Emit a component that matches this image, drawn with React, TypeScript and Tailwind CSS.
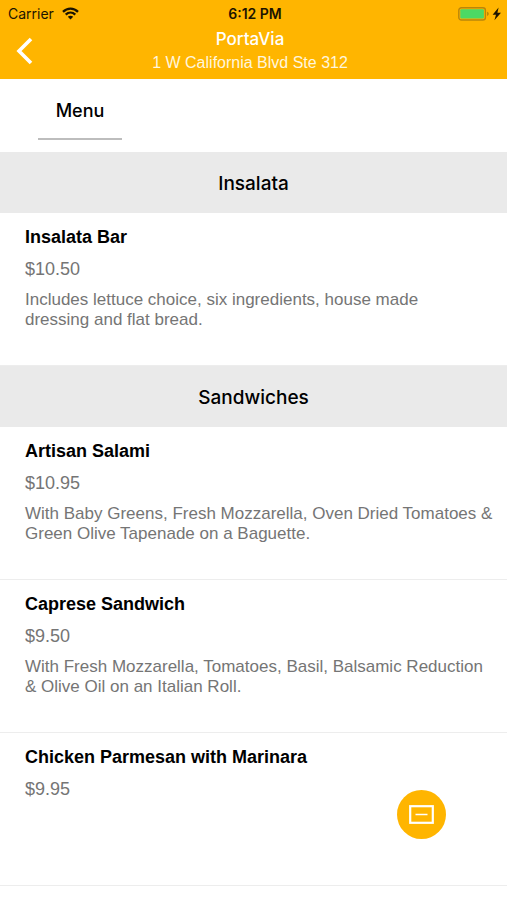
import React from 'react';

interface MenuItem {
    name: string;
    price: number;
    description?: string;
}

interface MenuSection {
    title: string;
    items: MenuItem[];
}

const sections: MenuSection[] = [
    {
        title: 'Insalata',
        items: [
            { name: 'Insalata Bar', price: 10.5, description: 'Includes lettuce choice, six ingredients, house made\ndressing and flat bread.' },
        ],
    },
    {
        title: 'Sandwiches',
        items: [
            { name: 'Artisan Salami', price: 10.95, description: 'With Baby Greens, Fresh Mozzarella, Oven Dried Tomatoes & Green Olive Tapenade on a Baguette.' },
            { name: 'Caprese Sandwich', price: 9.5, description: 'With Fresh Mozzarella, Tomatoes, Basil, Balsamic Reduction & Olive Oil on an Italian Roll.' },
            { name: 'Chicken Parmesan with Marinara', price: 9.95 },
        ],
    },
];

const WifiIcon: React.FC = () => (
    <svg className="h-[13px] w-[17px]" viewBox="0 0 17 13" fill="none" stroke="currentColor" strokeWidth="2.3" aria-hidden="true">
        <path d="M1 4.9C5.2 0.6 11.8 0.6 16 4.9" />
        <path d="M3.7 7.7C6.5 5 10.5 5 13.3 7.7" />
        <path d="M8.5 12.4L5.8 9.7C7.3 8.3 9.7 8.3 11.2 9.7Z" fill="currentColor" stroke="none" />
    </svg>
);

const BatteryIcon: React.FC = () => (
    <svg className="h-[14px] w-[44px]" viewBox="0 0 44 14" aria-hidden="true">
        <rect x="0.8" y="0.8" width="26.6" height="12.2" rx="2.6" fill="none" stroke="#b9860b" strokeWidth="1.4" />
        <rect x="2.3" y="2.3" width="23.6" height="9.2" rx="1" fill="#4cd964" />
        <path d="M29 4.8C31.4 5.5 31.4 8.3 29 9Z" fill="#b9860b" />
        <path d="M40.6 0.6L34.6 7.8H38L36.4 13.2L43 5.8H39.4Z" fill="#1c1400" />
    </svg>
);

const StatusBar: React.FC = () => (
    <div className="grid h-[27px] grid-cols-3 items-center pr-[5px] pl-2 font-['Inter',sans-serif] text-[14px] text-[#1c1400]">
        <div className="flex items-center gap-2">
            <span>Carrier</span>
            <WifiIcon />
        </div>
        <span className="text-center text-[14px] font-semibold">6:12 PM</span>
        <div className="flex justify-end">
            <BatteryIcon />
        </div>
    </div>
);

const Header: React.FC = () => (
    <header className="bg-[#ffb500]">
        <StatusBar />
        <div className="grid grid-cols-[41px_1fr_48px] items-center pb-1 text-white">
            <button type="button" aria-label="Back" className="flex h-12 items-center pl-4">
                <svg className="h-7 w-[17px]" viewBox="0 0 17 28" fill="none" stroke="currentColor" strokeWidth="3.6" aria-hidden="true">
                    <path d="M15 2L3 14L15 26" />
                </svg>
            </button>
            <div className="text-center">
                <h1 className="text-[17px] leading-6 font-medium font-['Inter',sans-serif]">PortaVia</h1>
                <p className="text-[16px] leading-6 text-[#fff6dd]">1 W California Blvd Ste 312</p>
            </div>
        </div>
    </header>
);

const MenuRow: React.FC<{ item: MenuItem }> = ({ item }) => (
    <li className="min-h-[153px] border-b border-[#ededed] pt-3 pr-[13px] pl-[25px]">
        <h3 className="text-[18px] leading-6 font-bold text-black">{item.name}</h3>
        <p className="mt-2 text-[18px] leading-6 text-[#757575]">${item.price.toFixed(2)}</p>
        {item.description && (
            <p className="mt-[9px] text-[17px] leading-5 whitespace-pre-line text-[#757575]">{item.description}</p>
        )}
    </li>
);

const App: React.FC = () => {
    return (
        <div className="min-h-screen bg-white font-['Liberation_Sans',Arial,sans-serif]">
            <Header />
            <nav className="flex h-[73px] items-start px-[38px]">
                <button type="button" className="h-[61px] w-[84px] border-b-2 border-[#bdbdbd] pt-1 text-[18px] font-medium text-black font-['Inter',sans-serif]">
                    Menu
                </button>
            </nav>
            <main>
                {sections.map((section) => (
                    <section key={section.title}>
                        <h2 className="flex h-[61px] items-center justify-center bg-[#eaeaea] pt-1 text-[19px] font-medium text-black font-['Inter',sans-serif]">
                            {section.title}
                        </h2>
                        <ul>
                            {section.items.map((item) => (
                                <MenuRow key={item.name} item={item} />
                            ))}
                        </ul>
                    </section>
                ))}
            </main>
            <button type="button" aria-label="Order" className="fixed right-[61px] bottom-[61px] flex size-[49px] items-center justify-center rounded-full bg-[#ffb500] text-white">
                <svg className="h-[19px] w-[25px]" viewBox="0 0 25 19" fill="none" stroke="currentColor" aria-hidden="true">
                    <rect x="1.2" y="1.2" width="22.6" height="16.6" strokeWidth="2.2" />
                    <path d="M6.5 9.5H18.5" strokeWidth="1.5" />
                </svg>
            </button>
        </div>
    );
};

export default App;
